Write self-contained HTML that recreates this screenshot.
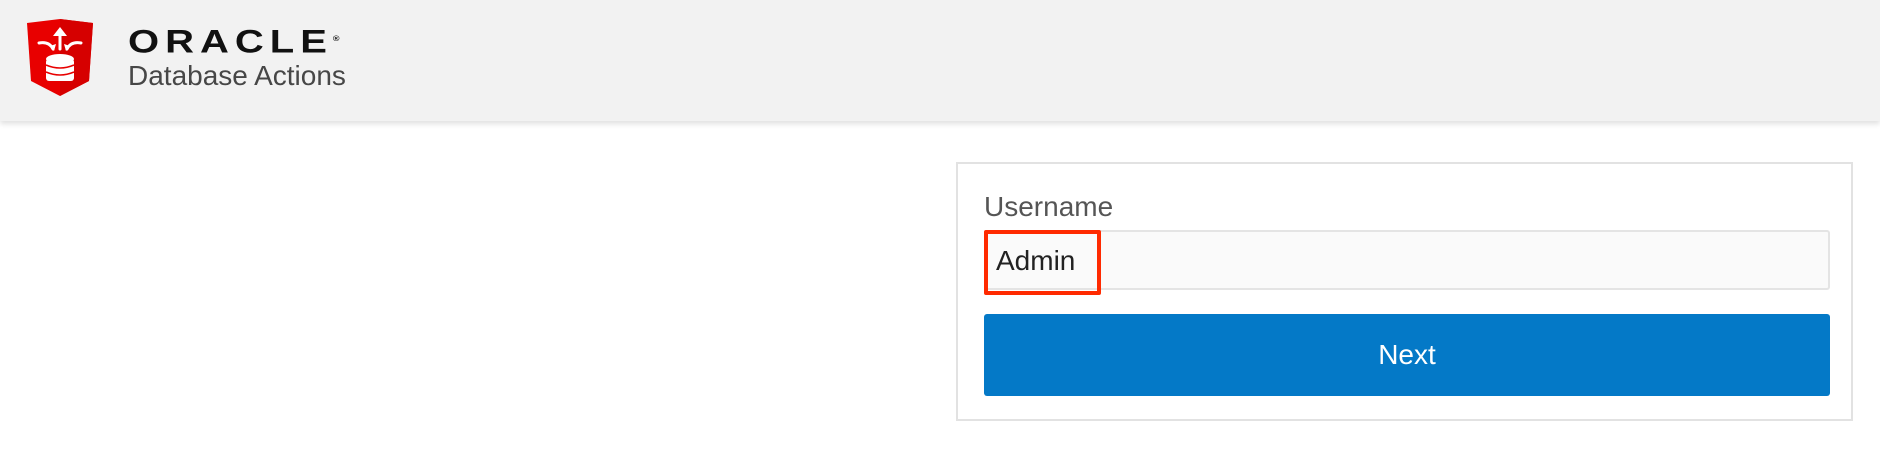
<!DOCTYPE html>
<html><head><meta charset="utf-8"><style>
body{margin:0;width:1880px;height:452px;background:#fff;font-family:"Liberation Sans",sans-serif;position:relative;overflow:hidden}
.hdr{position:absolute;left:0;top:0;width:1880px;height:121px;background:#f2f2f2;box-shadow:0 3px 5px rgba(0,0,0,.12)}
.card{position:absolute;left:956px;top:162px;width:897px;height:259px;border:2px solid #e2e2e2;box-sizing:border-box}
</style></head><body>
<div class="hdr">
<svg style="position:absolute;left:27px;top:19px" width="66" height="77" viewBox="0 0 66 77">
<path d="M0 4 L33 0 L66 4 L62 62 L33 77 L4 62 Z" fill="#e80000"/>
<path d="M33 0 L66 4 L62 62 L33 77 Z" fill="#d60000"/>
<g stroke="#fff" stroke-width="3" fill="none" stroke-linecap="round">
<path d="M33 30 V12"/>
<path d="M12 24 Q22 22 26 30"/><path d="M54 24 Q44 22 40 30"/>
</g>
<path d="M26 17 L33 8 L40 17 Z" fill="#fff"/>
<path d="M23 27 L27 32 L29 25 Z M43 27 L39 32 L37 25 Z" fill="#fff"/>
<g fill="#fff"><ellipse cx="33" cy="40" rx="14" ry="5"/><rect x="19" y="40" width="28" height="22" rx="3"/></g>
<g stroke="#e80000" stroke-width="1.5" fill="none"><path d="M19 46 Q33 52 47 46"/><path d="M19 53 Q33 59 47 53"/></g>
</svg>
<div style="position:absolute;left:128px;top:22px;font-size:40px;font-weight:bold;letter-spacing:6px;color:#111;transform:scaleY(0.82);transform-origin:left top;line-height:40px">ORACLE<sup style="font-size:9px;letter-spacing:0">®</sup></div>
<div style="position:absolute;left:128px;top:60px;font-size:28px;color:#474747">Database Actions</div>
</div>
<div class="card">
<div style="position:absolute;left:26px;top:27px;font-size:28px;color:#555">Username</div>
<div style="position:absolute;left:26px;top:66px;width:846px;height:60px;background:#fafafa;border:2px solid #e4e4e4;border-radius:3px;box-sizing:border-box"></div>
<div style="position:absolute;left:26px;top:66px;width:117px;height:65px;border:4px solid #ff2a00;border-radius:2px;box-sizing:border-box"></div>
<div style="position:absolute;left:38px;top:81px;font-size:28px;color:#222">Admin</div>
<div style="position:absolute;left:26px;top:150px;width:846px;height:82px;background:#0479c7;border-radius:3px;color:#fff;font-size:28px;text-align:center;line-height:82px">Next</div>
</div>
</body></html>
